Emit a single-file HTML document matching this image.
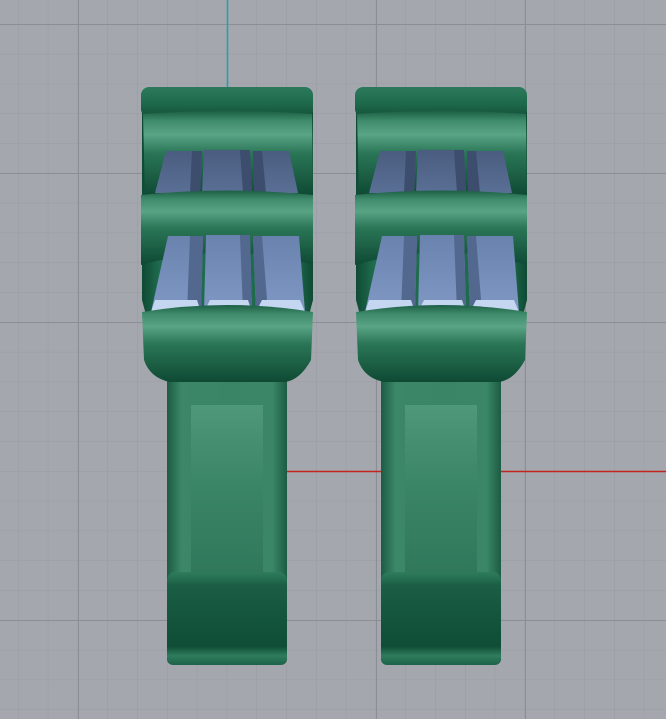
<!DOCTYPE html>
<html><head><style>
html,body{margin:0;padding:0;width:666px;height:719px;overflow:hidden;background:#a4a8ae}
</style></head><body>
<svg width="666" height="719" viewBox="0 0 666 719" xmlns="http://www.w3.org/2000/svg">
<defs>
<pattern id="minor" width="29.8" height="29.8" patternUnits="userSpaceOnUse" x="18" y="24">
<path d="M0 0H29.8M0 0V29.8" stroke="#999da3" stroke-width="1" fill="none"/>
</pattern>
<linearGradient id="band" x1="0" y1="0" x2="0" y2="1">
<stop offset="0" stop-color="#1d5f45"/><stop offset="0.12" stop-color="#3f8c6c"/><stop offset="0.28" stop-color="#5aa486"/><stop offset="0.5" stop-color="#2a7657"/><stop offset="1" stop-color="#0f4a34"/>
</linearGradient>
<linearGradient id="back" x1="0" y1="0" x2="1" y2="0">
<stop offset="0" stop-color="#0f4a34"/><stop offset="0.1" stop-color="#1f6b4d"/><stop offset="0.9" stop-color="#1f6b4d"/><stop offset="1" stop-color="#0f4a34"/>
</linearGradient>
<linearGradient id="cap" x1="0" y1="0" x2="0" y2="1">
<stop offset="0" stop-color="#2c7a5b"/><stop offset="0.5" stop-color="#1f6b4d"/><stop offset="1" stop-color="#14523a"/>
</linearGradient>
<linearGradient id="stem" x1="0" y1="0" x2="1" y2="0">
<stop offset="0" stop-color="#1c5c43"/><stop offset="0.12" stop-color="#3b8767"/><stop offset="0.5" stop-color="#3a8566"/><stop offset="0.88" stop-color="#3a8666"/><stop offset="1" stop-color="#1c5c43"/>
</linearGradient>
<linearGradient id="panel" x1="0" y1="0" x2="0" y2="1">
<stop offset="0" stop-color="#4f987a"/><stop offset="0.5" stop-color="#3a8566"/><stop offset="1" stop-color="#31785b"/>
</linearGradient>
<linearGradient id="foot" x1="0" y1="0" x2="0" y2="1">
<stop offset="0" stop-color="#2f7c5d"/><stop offset="0.15" stop-color="#1a5e44"/><stop offset="0.8" stop-color="#0f4d36"/><stop offset="0.9" stop-color="#2f7c5d"/><stop offset="1" stop-color="#1c6248"/>
</linearGradient>
<linearGradient id="t1" x1="0" y1="0" x2="0" y2="1">
<stop offset="0" stop-color="#4a5d80"/><stop offset="1" stop-color="#5a6f95"/>
</linearGradient>
<linearGradient id="t2" x1="0" y1="0" x2="0" y2="1">
<stop offset="0" stop-color="#6a82ae"/><stop offset="1" stop-color="#7f98c4"/>
</linearGradient>
</defs>
<rect width="666" height="719" fill="url(#minor)"/>
<g stroke="#8b8f95" stroke-width="1">
<path d="M78.5 0V719M376.5 0V719M525.5 0V719M0 24.5H666M0 173.5H666M0 322.5H666M0 620.5H666"/>
</g>
<path d="M227.5 0V90" stroke="#1aa3b0" stroke-width="1.5"/>
<path d="M287 471.5H666" stroke="#c4241e" stroke-width="1.5"/>

<g id="obj">
<rect x="167" y="370" width="120" height="295" rx="6" fill="url(#stem)"/>
<rect x="191" y="405" width="72" height="167" fill="url(#panel)"/>
<rect x="167" y="572" width="120" height="93" rx="8" fill="url(#foot)"/>
<!-- backing -->
<path d="M142 110 H313 V300 L305 330 L150 330 L142 300 Z" fill="url(#back)"/>
<rect x="141" y="87" width="172" height="30" rx="8" fill="url(#cap)"/>
<path d="M143 114 Q227 108 312 114 L313 195 Q227 186 145 195 Z" fill="url(#band)"/>
<path d="M166 151 H202 L200 193 H155 Z" fill="url(#t1)"/>
<path d="M204 150 H250 L252 193 H202 Z" fill="url(#t1)"/>
<path d="M253 151 H289 L298 193 H254 Z" fill="url(#t1)"/>
<path d="M192 151 L202 151 L200 193 L190 193Z M240 150 L250 150 L252 193 L243 193Z M253 151 L262 151 L266 193 L254 193Z" fill="#3c4d6e"/>
<path d="M141 195 Q227 186 313 195 L313 265 Q227 240 141 265 Z" fill="url(#band)"/>
<path d="M168 236 H203 L201 312 H151 Z" fill="url(#t2)"/>
<path d="M206 235 H250 L252 312 H204 Z" fill="url(#t2)"/>
<path d="M253 236 H299 L305 312 H256 Z" fill="url(#t2)"/>
<path d="M190 236 L203 236 L201 312 L187 312Z M240 235 L250 235 L252 312 L243 312Z M253 236 L262 236 L268 312 L256 312Z" fill="#53688f"/>
<path d="M155 300 H197 L201 312 H151Z M210 300 H248 L252 312 H204Z M262 300 H300 L305 312 H256Z" fill="#c4d6f0"/>
<path d="M142 312 Q227 298 313 312 L311 360 Q300 380 285 382 L170 382 Q150 378 144 360 Z" fill="url(#band)"/>
</g>
<use href="#obj" transform="translate(214,0)"/>
</svg>
</body></html>
